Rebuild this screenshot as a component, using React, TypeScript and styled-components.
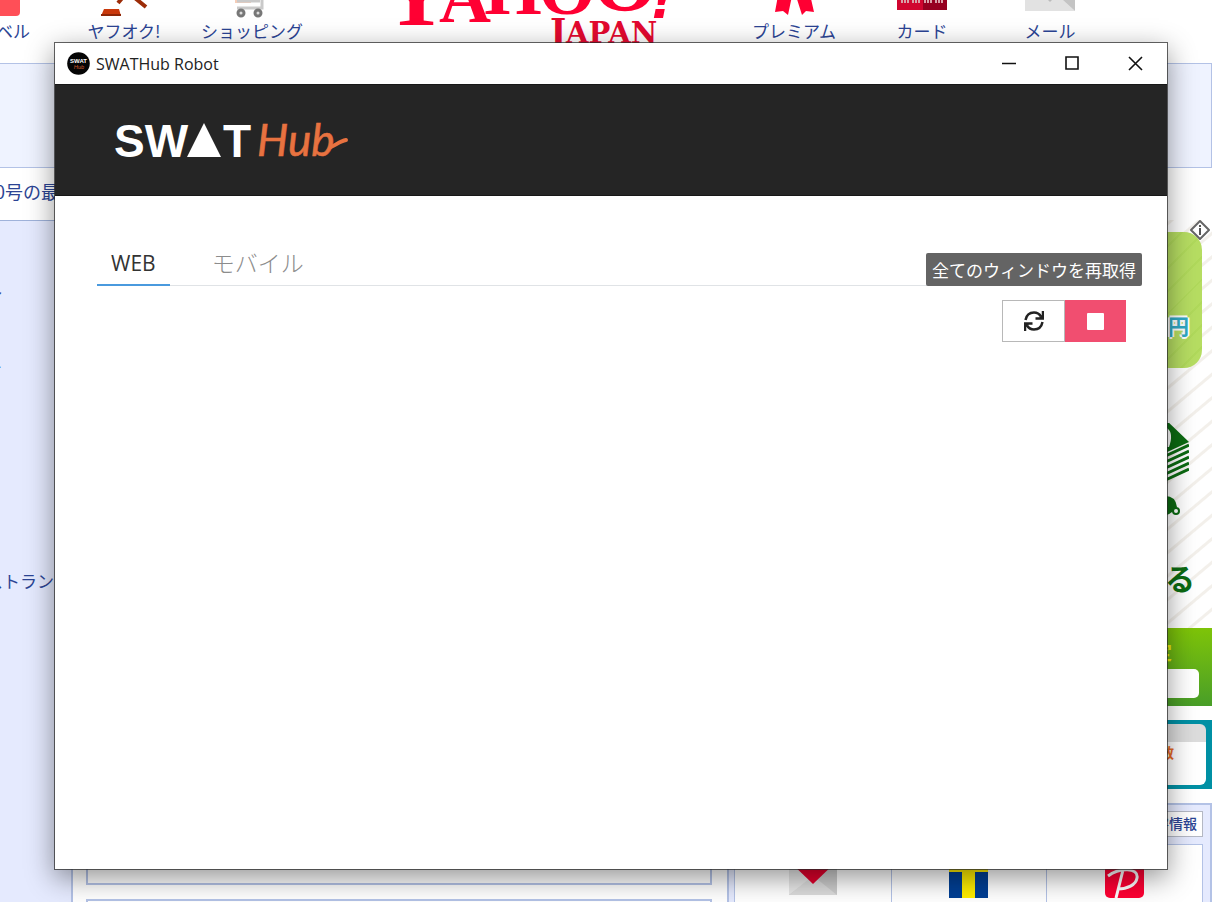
import React from 'react';
import styled, { createGlobalStyle } from 'styled-components';

const GlobalStyle = createGlobalStyle`
  * { box-sizing: border-box; }
  body { margin: 0; background: #fff; font-family: "Open Sans", "Noto Sans CJK JP", sans-serif; }
  a { color: #2b4494; text-decoration: none; }
  svg { display: block; }
`;

const line = '#b3c2e6';
const lavender = '#e5eafe';

const Desktop = styled.div`
  position: relative;
  height: 100vh;
  min-height: 480px;
  overflow: hidden;
`;

/* ---------- portal page behind the window ---------- */

const Portal = styled.div`
  font-family: "Noto Sans CJK JP", sans-serif;
`;

const PortalHeader = styled.header`
  display: flex;
  justify-content: space-between;
  height: 63px;
  padding-right: 109px;
  overflow: hidden;
`;

const ServiceNav = styled.nav<{ $shift?: number }>`
  display: flex;
  flex: none;
  margin-left: ${p => p.$shift ?? 0}px;
`;

const ServiceLink = styled.a`
  display: flex;
  flex-direction: column;
  align-items: center;
  width: 128px;
  font-size: 17px;
  line-height: 26px;
  white-space: nowrap;
`;

const PromoBox = styled.section`
  height: 105px;
  margin-right: 11px;
  background: #eff3ff;
  border: 1px solid ${line};
  border-left: 0;
`;

const NewsRow = styled.p`
  margin: 0 0 0 -15px;
  font-size: 18px;
  line-height: 47px;
  height: 52px;
`;

const PortalBody = styled.div`
  display: flex;
  padding-right: 11px;
`;

const SideMenu = styled.nav`
  flex: none;
  width: 73px;
  padding-top: 57px;
  background: ${lavender};
  border-top: 1px solid #9fb2da;
  border-right: 2px solid ${line};
`;

const SideLink = styled.a<{ $shift: number; $gap: number }>`
  display: block;
  margin-left: ${p => p.$shift}px;
  margin-bottom: ${p => p.$gap}px;
  font-size: 17px;
  line-height: 26px;
  white-space: nowrap;
`;

const Feed = styled.div`
  display: flex;
  flex: 1;
  flex-direction: column;
  gap: 14px;
  padding: 12px 15px 0 13px;
`;

const FeedBox = styled.section<{ $height: number }>`
  display: flex;
  align-items: flex-end;
  height: ${p => p.$height}px;
  padding: 14px;
  border: 2px solid ${line};
`;

const FeedBanner = styled.div`
  width: 198px;
  height: 80px;
  background: #17334c;
`;

const Aside = styled.aside`
  display: flex;
  flex: none;
  flex-direction: column;
  gap: 14px;
  width: 485px;
`;

const Ad = styled.section`
  display: flex;
  flex-direction: column;
  align-items: flex-end;
  height: 486px;
  color: #0c6b12;
  background: repeating-linear-gradient(140deg, #fff 0 14px, #f3f0eb 15px 17px, #fff 18px);
`;

const AdInfo = styled.button`
  position: absolute;
  top: 220px;
  right: 13px;
  width: 20px;
  height: 20px;
  padding: 0;
  border: 0;
  background: transparent;
`;

const AdPrice = styled.div`
  width: 200px;
  height: 136px;
  margin: 12px 10px 55px 0;
  padding: 78px 13px 0 0;
  border-radius: 18px;
  background: repeating-linear-gradient(135deg, #b6dd62 0 14px, #b0d95b 14px 16px);
  color: #31a9c4;
  font-size: 21px;
  line-height: 30px;
  font-weight: 700;
  text-align: right;
  text-shadow: 2px 0 #fff, -2px 0 #fff, 0 2px #fff, 0 -2px #fff;
`;

const AdArt = styled.div`
  margin-right: 23px;
`;

const AdCopy = styled.p`
  flex: 1;
  margin: 34px 17px 0 0;
  font-size: 30px;
  line-height: 48px;
  font-weight: 700;
`;

const AdFooter = styled.div`
  align-self: stretch;
  display: flex;
  flex-direction: column;
  align-items: flex-end;
  height: 78px;
  background: linear-gradient(#7ec408, #6ab515 40%, #489e28);
  color: #f2ee10;
  font-size: 19px;
  line-height: 22px;
  font-weight: 700;
`;

const AdFooterText = styled.span`
  margin: 13px 40px 6px 0;
`;

const AdFooterButton = styled.button`
  width: 180px;
  height: 29px;
  margin-right: 13px;
  border: 0;
  border-radius: 5px;
  background: #fff;
`;

const TealBanner = styled.section`
  height: 69px;
  padding: 4px 6px 4px 4px;
  background: #0090a4;
`;

const TealInner = styled.div`
  height: 61px;
  padding: 18px 32px 0 0;
  border-radius: 6px;
  background: linear-gradient(#dcdcdc 18px, #fff 18px);
  color: #e86a24;
  font-size: 14px;
  line-height: 20px;
  font-weight: 700;
  text-align: right;
`;

const InfoPanel = styled.section`
  display: flex;
  flex-direction: column;
  height: 200px;
  padding: 6px 7px 6px 5px;
  border: 2px solid ${line};
  background: ${lavender};
`;

const InfoTab = styled.a`
  align-self: flex-end;
  width: 90px;
  height: 26px;
  margin-bottom: 7px;
  padding-right: 5px;
  border: 1px solid #b4b8c4;
  background: #fff;
  font-size: 14px;
  line-height: 22px;
  font-weight: 500;
  text-align: right;
`;

const ServiceGrid = styled.div`
  display: grid;
  grid-template-columns: repeat(3, 1fr);
  flex: 1;
  border: 1px solid ${line};
  background: #fff;
`;

const ServiceCell = styled.a`
  display: flex;
  justify-content: center;
  padding-top: 14px;
  & + & { border-left: 1px solid ${line}; }
`;

/* ---------- robot window ---------- */

const Window = styled.main`
  position: absolute;
  inset: 42px 55px 32px 54px;
  display: flex;
  flex-direction: column;
  border: 1px solid rgba(40, 40, 40, 0.72);
  background: #fff;
  background-clip: padding-box;
  box-shadow: 0 8px 26px rgba(0, 0, 0, 0.42);
`;

const TitleBar = styled.div`
  display: flex;
  align-items: center;
  height: 41px;
  padding-left: 12px;
`;

const WindowTitle = styled.h1`
  flex: 1;
  margin: 0 0 0 6px;
  color: #222;
  font-size: 16px;
  line-height: 24px;
  font-weight: 400;
`;

const WindowControl = styled.button`
  display: flex;
  align-items: center;
  justify-content: center;
  width: 63px;
  height: 40px;
  padding: 0;
  border: 0;
  background: transparent;
`;

const Brand = styled.header`
  display: flex;
  align-items: center;
  height: 112px;
  padding-left: 59px;
  background: #252525;
  border-top: 1px solid #171717;
  border-bottom: 1px solid #171717;
`;

const Content = styled.div`
  flex: 1;
  padding: 42px 41px 0 42px;
`;

const TabRow = styled.div`
  display: flex;
  gap: 28px;
  border-bottom: 1px solid #e0e3e6;
`;

const Tab = styled.button<{ $active?: boolean }>`
  height: 48px;
  margin-bottom: -1px;
  padding: 4px 14px 0;
  border: 0;
  border-bottom: 2px solid ${p => (p.$active ? '#4a9ade' : 'transparent')};
  background: transparent;
  color: ${p => (p.$active ? '#333' : '#8c8c8c')};
  font-family: "Open Sans", "Noto Sans CJK JP", sans-serif;
  font-size: ${p => (p.$active ? 21 : 23)}px;
  line-height: 32px;
  font-weight: ${p => (p.$active ? 400 : 300)};
`;

const Actions = styled.div`
  position: relative;
  display: flex;
  justify-content: flex-end;
  padding-top: 14px;
`;

const ActionButton = styled.button<{ $danger?: boolean }>`
  display: flex;
  align-items: center;
  justify-content: center;
  width: ${p => (p.$danger ? 61 : 63)}px;
  height: 42px;
  padding: 0;
  border: ${p => (p.$danger ? '0' : '1px solid #b8b8b8')};
  background: ${p => (p.$danger ? '#f14e70' : '#fff')};
`;

const Tooltip = styled.div`
  position: absolute;
  right: -16px;
  bottom: 56px;
  padding: 0 6px;
  border-radius: 2px;
  background: #646464;
  color: #fff;
  font-family: "Noto Sans CJK JP", sans-serif;
  font-size: 17px;
  line-height: 33px;
  white-space: nowrap;
`;

const PortalLogo = () => (
  <svg width="288" height="44" viewBox="-6 0 288 44" role="img" aria-label="Yahoo! Japan">
    <g fill="#ff0033" fontFamily="Liberation Serif" fontWeight="700">
      <text x="31" y="25" fontSize="92" textAnchor="middle">Y</text>
      <text x="80" y="22" fontSize="72" textAnchor="middle">A</text>
      <text x="128" y="14" fontSize="74" textAnchor="middle">H</text>
      <text x="182" y="14" fontSize="74" textAnchor="middle">O</text>
      <text x="240" y="11" fontSize="84" textAnchor="middle">O</text>
      <text x="277" y="18" fontSize="52" textAnchor="middle" fontFamily="DejaVu Sans" fontStyle="italic">!</text>
    </g>
    <text x="165" y="43" fontSize="29" fontWeight="700" fill="#e3092f" fontFamily="DejaVu Serif">
      <tspan fontSize="34">J</tspan>APAN
    </text>
  </svg>
);

const BrandLogo = () => (
  <svg width="240" height="48" viewBox="0 0 240 48" role="img" aria-label="SWATHub">
    <g fill="#fff" fontFamily="Liberation Sans" fontWeight="700" fontSize="46">
      <text x="0" y="41">SW</text>
      <text x="109" y="41">T</text>
    </g>
    <path d="M90 7 L107 41 H73 Z" fill="#fff" />
    <text x="143" y="40" fill="#e87240" stroke="#e87240" strokeWidth="0.600" fontFamily="Lato" fontStyle="italic" fontSize="44">Hub</text>
    <path d="M217 31 C222 29 226 25 232 24" fill="none" stroke="#e87240" strokeWidth="4" strokeLinecap="round" />
  </svg>
);

const AppBadge = () => (
  <svg width="23" height="23" viewBox="0 0 23 23" aria-hidden="true">
    <circle cx="11.500" cy="11.500" r="11.300" fill="#050505" />
    <text x="11.500" y="11" fill="#fff" fontFamily="Liberation Sans" fontWeight="700" fontSize="6" textAnchor="middle">SWAT</text>
    <text x="12" y="17" fill="#c8562a" fontFamily="Lato" fontStyle="italic" fontSize="6" textAnchor="middle">Hub</text>
  </svg>
);

export default function App() {
  return (
    <Desktop>
      <GlobalStyle />
      <Portal>
        <PortalHeader>
          <ServiceNav $shift={-68}>
            <ServiceLink href="#travel">
              <svg width="50" height="18"><rect x="2" y="-30" width="47" height="46" rx="4" fill="#ff4f57" /></svg>
              トラベル
            </ServiceLink>
            <ServiceLink href="#auction">
              <svg width="50" height="18">
                <path d="M5 9H20L22 16H2Z" fill="#c9390c" />
                <path d="M2 14H22V16H2Z" fill="#8f2606" />
                <path d="M31 -6L47 7M19 3L24 -3" stroke="#9c2c08" strokeWidth="4" />
              </svg>
              ヤフオク!
            </ServiceLink>
            <ServiceLink href="#shopping">
              <svg width="50" height="18">
                <path d="M8 0H24V3H8Z" fill="#f5cdb8" />
                <path d="M10 1H33M35 -4V8H10" fill="none" stroke="#c9c9c9" strokeWidth="3" />
                <circle cx="14" cy="13" r="3" fill="#ddd" stroke="#777" strokeWidth="3" />
                <circle cx="31" cy="13" r="3" fill="#ddd" stroke="#777" strokeWidth="3" />
              </svg>
              ショッピング
            </ServiceLink>
          </ServiceNav>
          <PortalLogo />
          <ServiceNav>
            <ServiceLink href="#premium">
              <svg width="50" height="18" fill="#ff0033">
                <path d="M10 -10L23 -4L19 15L14 11L6 12Z" />
                <path d="M40 -10L27 -4L33 15L37 11L45 12Z" />
              </svg>
              プレミアム
            </ServiceLink>
            <ServiceLink href="#card">
              <svg width="50" height="18">
                <path d="M0 -5H50V10H0Z" fill="#d00630" />
                <path d="M26 0L50 -5V10H26Z" fill="#960020" />
                <path d="M4 1H12M15 1H23M27 1H35M38 1H46" stroke="#d8a0a8" strokeWidth="4" strokeDasharray="2 1" />
              </svg>
              カード
            </ServiceLink>
            <ServiceLink href="#mail">
              <svg width="50" height="18">
                <path d="M0 -20H50V11H0Z" fill="#e2e2e2" />
                <path d="M25 -12L50 11V-12Z" fill="#c4c4c4" />
                <path d="M0 11L22 -8H28L50 11Z" fill="#e2e2e2" />
                <path d="M20 -3L25 2L30 -3Z" fill="#bbb" />
              </svg>
              メール
            </ServiceLink>
          </ServiceNav>
        </PortalHeader>
        <PromoBox />
        <NewsRow><a href="#news">10号の最新情報</a></NewsRow>
        <PortalBody>
          <SideMenu>
            <SideLink href="#travel" $shift={-66} $gap={50}>トラベル</SideLink>
            <SideLink href="#calendar" $shift={-83} $gap={188}>カレンダー</SideLink>
            <SideLink href="#restaurant" $shift={-31} $gap={0}>レストラン</SideLink>
          </SideMenu>
          <Feed>
            <FeedBox $height={653}><FeedBanner /></FeedBox>
            <FeedBox $height={120} />
          </Feed>
          <Aside>
            <Ad>
              <AdPrice>円</AdPrice>
              <AdArt>
                <svg width="60" height="96" viewBox="0 0 60 96" fill="#0c6b12">
                  <path d="M36 -4L60 19L36 30Z" />
                  <path d="M38 5Q45 10 40 24L36 24V5Z" fill="#fff" />
                  <path d="M30 36L60 22M30 42L60 28M30 48L60 34M30 54L60 40M30 60L60 46" stroke="#0c6b12" strokeWidth="3" />
                  <path d="M30 74Q46 70 48 84Q43 92 30 94Z" />
                  <circle cx="47" cy="88" r="3" fill="#fff" stroke="#0c6b12" strokeWidth="2" />
                </svg>
              </AdArt>
              <AdCopy>る</AdCopy>
              <AdFooter>
                <AdFooterText>定</AdFooterText>
                <AdFooterButton aria-label="詳細" />
              </AdFooter>
            </Ad>
            <TealBanner><TealInner>数</TealInner></TealBanner>
            <InfoPanel>
              <InfoTab href="#info">災害情報</InfoTab>
              <ServiceGrid>
                <ServiceCell href="#mailbox">
                  <svg width="48" height="36">
                    <path d="M0 0H48V36H0Z" fill="#ccc" />
                    <path d="M0 36V0L24 18Z" fill="#e8e8e8" />
                    <path d="M0 36L20 20H28L48 36Z" fill="#dcdcdc" />
                    <path d="M0 2H48L24 25Z" fill="#e2002c" />
                  </svg>
                </ServiceCell>
                <ServiceCell href="#point">
                  <svg width="39" height="39">
                    <path d="M0 0H39V39H0Z" fill="#003f94" />
                    <path d="M0 0H39V13H26V39H13V13H0Z" fill="#ffed00" />
                  </svg>
                </ServiceCell>
                <ServiceCell href="#pay">
                  <svg width="39" height="39">
                    <rect width="39" height="39" rx="5" fill="#ff0033" />
                    <path d="M11 39L18 11M3 17C14 9 34 8 32 19C31 26 22 30 13 30" fill="none" stroke="#fff" strokeWidth="3" />
                  </svg>
                </ServiceCell>
              </ServiceGrid>
            </InfoPanel>
          </Aside>
        </PortalBody>
        <AdInfo aria-label="広告について">
          <svg width="20" height="20" viewBox="0 0 20 20">
            <path d="M10 1L19 10L10 19L1 10Z" fill="#fff" stroke="#666" strokeWidth="2" strokeLinejoin="round" />
            <path d="M10 8V15M10 5V7" stroke="#555" strokeWidth="2" />
          </svg>
        </AdInfo>
      </Portal>

      <Window>
        <TitleBar>
          <AppBadge />
          <WindowTitle>SWATHub Robot</WindowTitle>
          <WindowControl aria-label="最小化">
            <svg width="15" height="15"><path d="M0 7.500H14" stroke="#111" strokeWidth="1.500" /></svg>
          </WindowControl>
          <WindowControl aria-label="最大化">
            <svg width="15" height="15"><path d="M1 1H13V13H1Z" fill="none" stroke="#111" strokeWidth="1.600" /></svg>
          </WindowControl>
          <WindowControl aria-label="閉じる">
            <svg width="15" height="15"><path d="M1 1L14 14M14 1L1 14" stroke="#111" strokeWidth="1.600" /></svg>
          </WindowControl>
        </TitleBar>
        <Brand><BrandLogo /></Brand>
        <Content>
          <TabRow role="tablist">
            <Tab role="tab" aria-selected="true" $active>WEB</Tab>
            <Tab role="tab" aria-selected="false">モバイル</Tab>
          </TabRow>
          <Actions>
            <ActionButton aria-describedby="refresh-tip" aria-label="再取得">
              <svg width="20" height="20" viewBox="0 0 20 20" fill="none" stroke="#222" strokeWidth="2.500">
                <path d="M1.500 9C2.500 4 6 1.500 10 1.500C13 1.500 15.500 3 17 5.500" />
                <path d="M18.500 11C17.500 16 14 18.500 10 18.500C7 18.500 4.500 17 3 14.500" />
                <path d="M19 0V7.500H11.500M1 20V12.500H8.500" />
                <path d="M19 3V7.500H14.500ZM1 17V12.500H5.500Z" fill="#222" stroke="none" />
              </svg>
            </ActionButton>
            <ActionButton $danger aria-label="停止">
              <svg width="17" height="17"><rect width="17" height="17" rx="1" fill="#fff" /></svg>
            </ActionButton>
            <Tooltip role="tooltip" id="refresh-tip">全てのウィンドウを再取得</Tooltip>
          </Actions>
        </Content>
      </Window>
    </Desktop>
  );
}
